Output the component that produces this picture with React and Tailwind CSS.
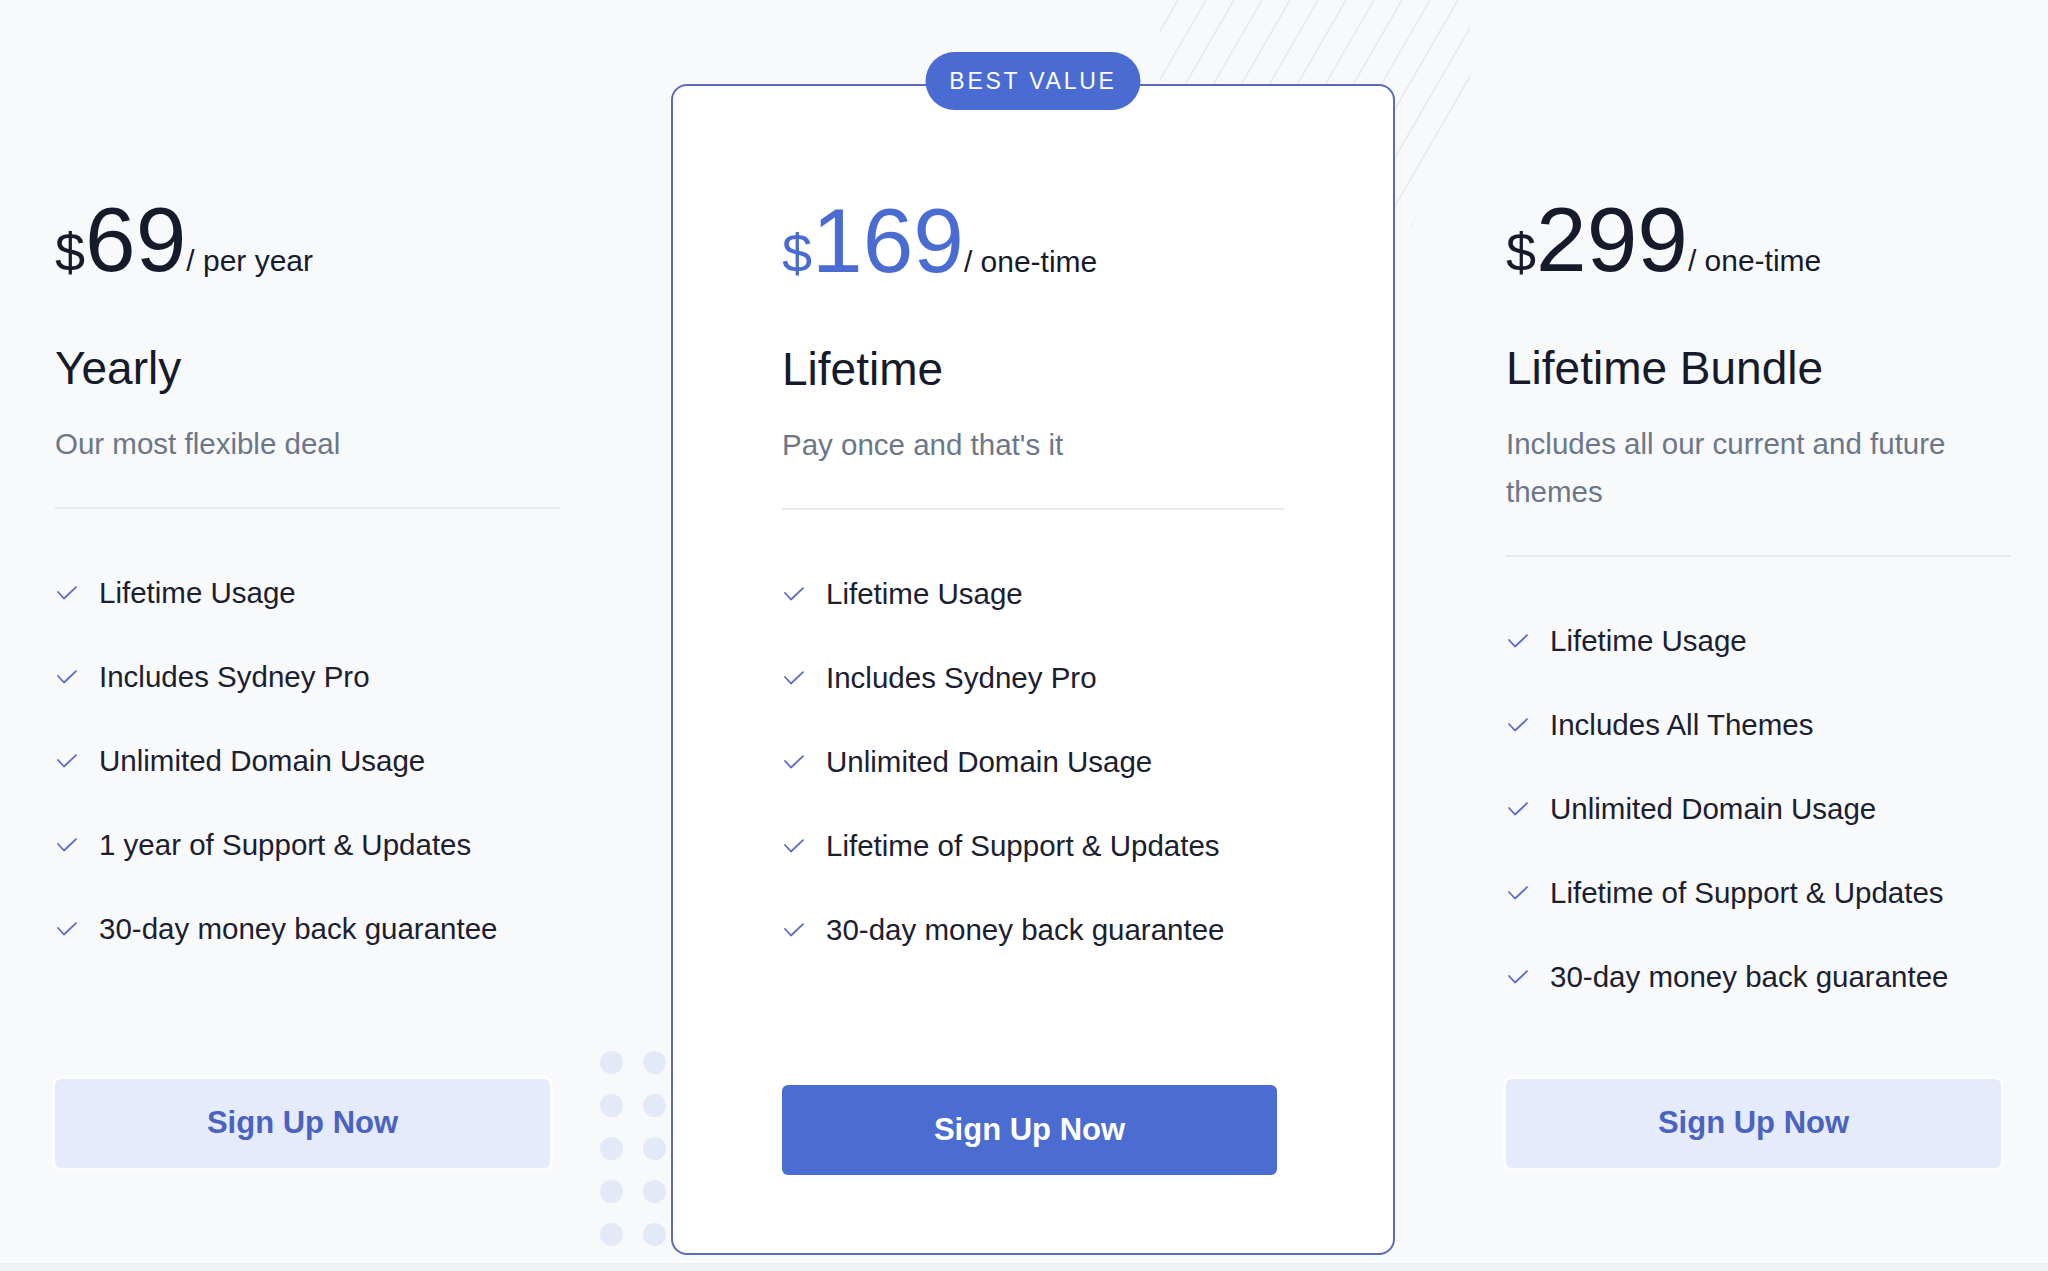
import React from "react";

const plans = [
  {
    price: "69",
    period: "/ per year",
    title: "Yearly",
    desc: "Our most flexible deal",
    features: [
      "Lifetime Usage",
      "Includes Sydney Pro",
      "Unlimited Domain Usage",
      "1 year of Support & Updates",
      "30-day money back guarantee",
    ],
  },
  {
    price: "169",
    period: "/ one-time",
    title: "Lifetime",
    desc: "Pay once and that's it",
    features: [
      "Lifetime Usage",
      "Includes Sydney Pro",
      "Unlimited Domain Usage",
      "Lifetime of Support & Updates",
      "30-day money back guarantee",
    ],
    featured: true,
  },
  {
    price: "299",
    period: "/ one-time",
    title: "Lifetime Bundle",
    desc: "Includes all our current and future themes",
    features: [
      "Lifetime Usage",
      "Includes All Themes",
      "Unlimited Domain Usage",
      "Lifetime of Support & Updates",
      "30-day money back guarantee",
    ],
  },
];

function Check() {
  return (
    <svg width="20" height="14" viewBox="0 0 20 14" fill="none" className="shrink-0">
      <polyline
        points="1,6 7,12.5 19,1.2"
        stroke="#5b6bc4"
        strokeWidth="1.8"
        strokeLinecap="round"
        strokeLinejoin="round"
      />
    </svg>
  );
}

function PlanBody({ plan }) {
  const blue = plan.featured;
  return (
    <>
      <div className="flex items-baseline leading-none">
        <span className={`text-[54px] ${blue ? "text-[#4a6bd1]" : "text-[#161b2b]"}`}>$</span>
        <span className={`text-[91px] ${blue ? "text-[#4a6bd1]" : "text-[#161b2b]"}`}>
          {plan.price}
        </span>
        <span className="text-[30px] text-[#161b2b]">{plan.period}</span>
      </div>
      <h3 className="mt-[56px] text-[46px] leading-[54px] text-[#161b2b]">{plan.title}</h3>
      <p className="mt-[25px] text-[29.5px] leading-[48px] text-[#6b7789]">{plan.desc}</p>
      <div className="mt-[39px] h-[2px] w-full bg-[#e7e9ed]" />
      <ul className="mt-[60px] flex flex-col gap-[36px]">
        {plan.features.map((f) => (
          <li key={f} className="flex items-center gap-[22px] pl-[2px] text-[29.5px] leading-[48px] text-[#1b2030]">
            <Check />
            <span>{f}</span>
          </li>
        ))}
      </ul>
    </>
  );
}

function Lines() {
  const lines = [];
  for (let i = 0; i < 18; i++) {
    const x0 = 1000 + 28 * i;
    lines.push(
      <line key={i} x1={x0} y1={260} x2={x0 + 150} y2={0} stroke="#e6e8ec" strokeWidth="1.5" />
    );
  }
  return (
    <svg className="absolute left-0 top-0" width="2048" height="260" viewBox="0 0 2048 260">
      <defs>
        <clipPath id="band">
          <polygon points="1160,0 1470,0 1470,90 1412,226 1395,226 1395,84 1160,84" />
        </clipPath>
      </defs>
      <g clipPath="url(#band)">{lines}</g>
    </svg>
  );
}

function Dots() {
  return (
    <div className="absolute left-[600px] top-[1051px] grid grid-cols-7 gap-x-[20px] gap-y-[20px]">
      {Array.from({ length: 35 }).map((_, i) => (
        <div key={i} className="h-[23px] w-[23px] rounded-full bg-[#e3e9f7]" />
      ))}
    </div>
  );
}

export default function App() {
  const [yearly, lifetime, bundle] = plans;
  return (
    <div className="min-h-screen bg-[#eff1f4] font-['Liberation_Sans',Arial,sans-serif]">
      <div className="relative h-[1263px] overflow-hidden bg-[#f8f9fb]">
        <Lines />
        <Dots />
        <div className="relative flex items-stretch pl-[55px] pt-[84px]">
          <div className="flex w-[505px] flex-col pb-[87px] pt-[110px]">
            <PlanBody plan={yearly} />
            <button className="mt-auto h-[89px] w-[495px] rounded-[6px] bg-[#e6ebfb] text-[31px] font-semibold text-[#4a63bf] shadow-[0_0_0_3px_rgba(255,255,255,0.7)]">
              Sign Up Now
            </button>
          </div>

          <div className="relative ml-[111px] flex w-[724px] flex-col rounded-[16px] border-2 border-[#5b6bb5] bg-white px-[109px] pb-[78px] pt-[109px]">
            <div className="absolute left-1/2 top-[-34px] flex h-[58px] w-[215px] -translate-x-1/2 items-center justify-center rounded-full bg-[#4a6bd1] text-[23px] tracking-[0.12em] text-white">
              BEST VALUE
            </div>
            <PlanBody plan={lifetime} />
            <button className="mt-[131px] h-[90px] w-[495px] rounded-[6px] bg-[#4b6cd0] text-[31px] font-semibold text-white">
              Sign Up Now
            </button>
          </div>

          <div className="ml-[111px] flex w-[505px] flex-col pb-[87px] pt-[110px]">
            <PlanBody plan={bundle} />
            <button className="mt-auto h-[89px] w-[495px] rounded-[6px] bg-[#e6ebfb] text-[31px] font-semibold text-[#4a63bf] shadow-[0_0_0_3px_rgba(255,255,255,0.7)]">
              Sign Up Now
            </button>
          </div>
        </div>
      </div>
    </div>
  );
}
